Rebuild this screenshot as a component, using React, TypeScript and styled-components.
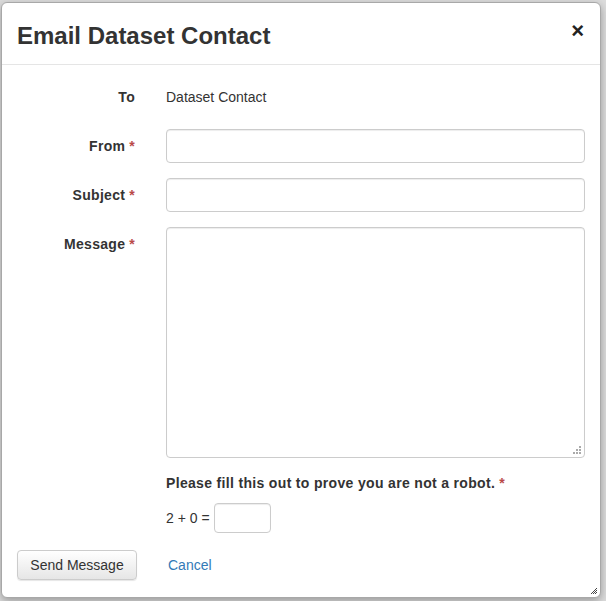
import React from 'react'
import styled, { createGlobalStyle } from 'styled-components'

const GlobalStyle = createGlobalStyle`
  html, body {
    margin: 0;
    padding: 0;
    background: #dcdcdc;
  }
  * {
    box-sizing: border-box;
  }
`

const Backdrop = styled.div`
  width: 606px;
  height: 601px;
  padding: 2px 5px 3px 1px;
  background: #dcdcdc;
  font-family: "Liberation Sans", Arial, sans-serif;
  font-size: 14px;
  color: #333;
`

const Modal = styled.div`
  position: relative;
  height: 100%;
  display: flex;
  flex-direction: column;
  background: #fff;
  border: 1px solid #a8a8a8;
  border-radius: 6px;
  box-shadow: 0 3px 9px rgba(0, 0, 0, 0.3);
`

const Header = styled.div`
  display: flex;
  align-items: center;
  justify-content: space-between;
  height: 62px;
  padding: 0 16px 0 15px;
  border-bottom: 1px solid #e5e5e5;
`

const Title = styled.h4`
  margin: 6px 0 0;
  font-size: 24px;
  font-weight: bold;
  color: #333;
  line-height: 1.1;
`

const Close = styled.button`
  border: 0;
  background: none;
  padding: 0;
  margin-top: -6px;
  font-family: "Liberation Sans", Arial, sans-serif;
  font-size: 22px;
  font-weight: bold;
  line-height: 1;
  color: #222;
  cursor: pointer;
`

const Body = styled.div`
  padding: 15px 15px 0;
  flex: 1;
`

const Row = styled.div<{ $top?: boolean }>`
  display: grid;
  grid-template-columns: 118px 1fr;
  column-gap: 31px;
  align-items: ${p => (p.$top ? 'start' : 'center')};
  margin-bottom: 15px;
`

const Label = styled.label<{ $top?: boolean }>`
  text-align: right;
  font-weight: bold;
  letter-spacing: 0.3px;
  line-height: 20px;
  padding-top: ${p => (p.$top ? '7px' : '0')};
`

const Star = styled.span`
  color: #b94a48;
  margin-left: 4px;
`

const Static = styled.div`
  line-height: 34px;
`

const Input = styled.input`
  display: block;
  width: 100%;
  height: 34px;
  border: 1px solid #ccc;
  border-radius: 4px;
  box-shadow: inset 0 1px 1px rgba(0, 0, 0, 0.075);
  font: inherit;
  padding: 6px 12px;
`

const TextWrap = styled.div`
  position: relative;
`

const TextArea = styled.textarea`
  display: block;
  width: 100%;
  height: 231px;
  border: 1px solid #ccc;
  border-radius: 4px;
  box-shadow: inset 0 1px 1px rgba(0, 0, 0, 0.075);
  font: inherit;
  resize: none;
`

const Grip = styled.svg`
  position: absolute;
  right: 4px;
  bottom: 4px;
`

const Captcha = styled.div`
  margin-left: 149px;
`

const CaptchaLabel = styled.div`
  font-weight: bold;
  letter-spacing: 0.33px;
  line-height: 20px;
  margin-bottom: 10px;
`

const CaptchaLine = styled.div`
  display: flex;
  align-items: center;
  gap: 4px;
`

const SmallInput = styled(Input)`
  width: 57px;
  height: 30px;
`

const Footer = styled.div`
  display: flex;
  align-items: center;
  gap: 31px;
  padding: 0 15px 17px;
`

const Button = styled.button`
  height: 30px;
  padding: 0 12px;
  width: 120px;
  font-family: "Liberation Sans", Arial, sans-serif;
  font-size: 14px;
  color: #333;
  background: linear-gradient(#fff, #e6e6e6);
  border: 1px solid #ccc;
  border-radius: 4px;
  box-shadow: 0 1px 1px rgba(0, 0, 0, 0.1);
`

const CancelLink = styled.a`
  color: #337ab7;
  text-decoration: none;
  font-size: 14px;
`

const CornerGrip = styled.svg`
  position: absolute;
  right: 2px;
  bottom: 2px;
`

const App: React.FC = () => {
  return (
    <>
      <GlobalStyle />
      <Backdrop>
        <Modal>
          <Header>
            <Title>Email Dataset Contact</Title>
            <Close aria-label="Close">×</Close>
          </Header>
          <Body>
            <Row>
              <Label>To</Label>
              <Static>Dataset Contact</Static>
            </Row>
            <Row>
              <Label>From<Star>*</Star></Label>
              <Input />
            </Row>
            <Row>
              <Label>Subject<Star>*</Star></Label>
              <Input />
            </Row>
            <Row $top>
              <Label $top>Message<Star>*</Star></Label>
              <TextWrap>
                <TextArea />
                <Grip width="8" height="8" viewBox="0 0 8 8">
                  <rect x="6" y="0" width="2" height="2" fill="#aaa" />
                  <rect x="3" y="3" width="2" height="2" fill="#aaa" />
                  <rect x="6" y="3" width="2" height="2" fill="#aaa" />
                  <rect x="0" y="6" width="2" height="2" fill="#aaa" />
                  <rect x="3" y="6" width="2" height="2" fill="#aaa" />
                  <rect x="6" y="6" width="2" height="2" fill="#aaa" />
                </Grip>
              </TextWrap>
            </Row>
            <Captcha>
              <CaptchaLabel>Please fill this out to prove you are not a robot.<Star>*</Star></CaptchaLabel>
              <CaptchaLine>
                <span>2 + 0 =</span>
                <SmallInput />
              </CaptchaLine>
            </Captcha>
          </Body>
          <Footer>
            <Button>Send Message</Button>
            <CancelLink href="#">Cancel</CancelLink>
          </Footer>
          <CornerGrip width="8" height="8" viewBox="0 0 8 8">
            <path d="M7 1 L1 7 M7 3 L3 7 M7 5 L5 7" stroke="#444" strokeWidth="1" />
          </CornerGrip>
        </Modal>
      </Backdrop>
    </>
  )
}

export default App
